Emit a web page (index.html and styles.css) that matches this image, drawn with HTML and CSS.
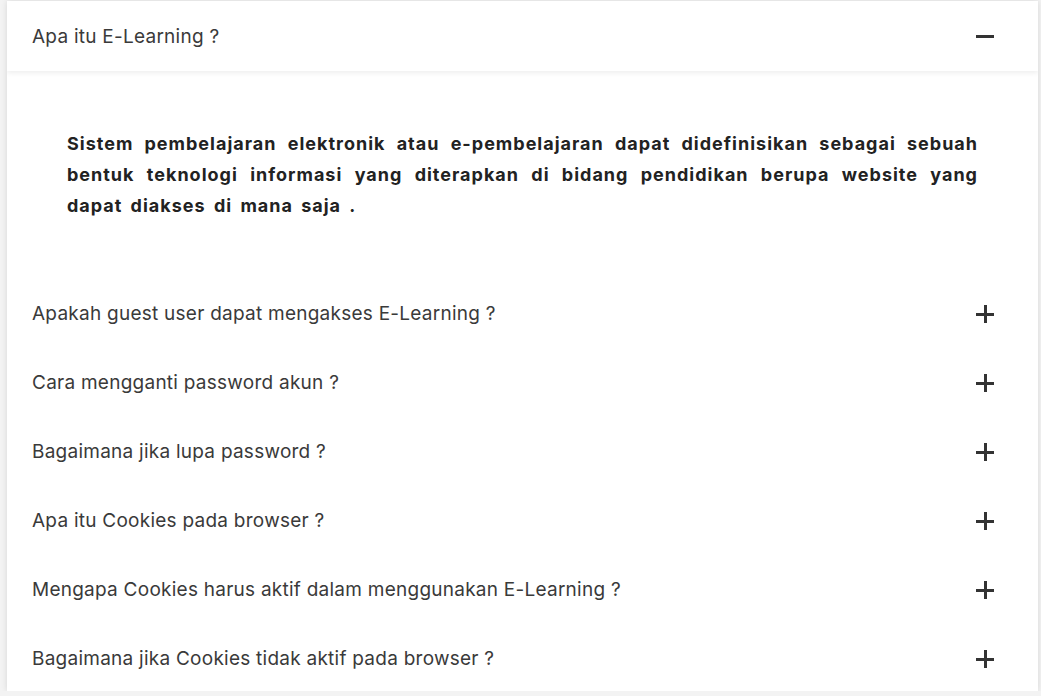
FILE: index.html
```html
<!DOCTYPE html>
<html lang="id">
<head>
<meta charset="utf-8">
<title>FAQ E-Learning</title>
<link rel="stylesheet" href="styles.css">
</head>
<body>
<div class="faq">
  <div class="item open">
    <div class="q q-head"><span>Apa itu E-Learning ?</span><span class="ico minus"></span></div>
    <div class="answer">
      <p>Sistem pembelajaran elektronik atau e-pembelajaran dapat didefinisikan sebagai sebuah bentuk teknologi informasi yang diterapkan di bidang pendidikan berupa website yang dapat diakses di mana saja .</p>
    </div>
  </div>
  <div class="q"><span>Apakah guest user dapat mengakses E-Learning ?</span><span class="ico plus"></span></div>
  <div class="q"><span>Cara mengganti password akun ?</span><span class="ico plus"></span></div>
  <div class="q"><span>Bagaimana jika lupa password ?</span><span class="ico plus"></span></div>
  <div class="q"><span>Apa itu Cookies pada browser ?</span><span class="ico plus"></span></div>
  <div class="q"><span>Mengapa Cookies harus aktif dalam menggunakan E-Learning ?</span><span class="ico plus"></span></div>
  <div class="q"><span>Bagaimana jika Cookies tidak aktif pada browser ?</span><span class="ico plus"></span></div>
</div>
</body>
</html>
```
FILE: styles.css
```css
html, body {
  margin: 0;
  padding: 0;
  background: #f3f3f3;
}
body {
  font-family: Inter, "Noto Sans", sans-serif;
  color: #333;
}
.faq {
  margin: 1px 3px 0 7px;
  width: 1031px;
  height: 690px;
  background: #fff;
  box-shadow: 0 0 6px rgba(0,0,0,0.12);
  overflow: hidden;
}
.q {
  height: 69px;
  display: flex;
  align-items: center;
  justify-content: space-between;
  padding: 0 44px 0 25px;
  font-size: 19px;
  letter-spacing: 0.25px;
  color: #3a3a3a;
}
.q-head {
  height: 70px;
  box-shadow: 0 2px 5px rgba(0,0,0,0.07);
  position: relative;
}
.answer {
  padding: 57px 60px 58px 60px;
}
.answer p {
  margin: 0;
  font-size: 18px;
  font-weight: 700;
  letter-spacing: 1px;
  word-spacing: 3px;
  line-height: 31px;
  text-align: justify;
  color: #222;
}
.ico {
  width: 18px;
  height: 18px;
  position: relative;
  flex: none;
}
.ico::before, .ico::after {
  content: "";
  position: absolute;
  background: #333;
}
.ico::before {
  left: 0;
  top: 8px;
  width: 18px;
  height: 3px;
}
.plus::after {
  left: 8px;
  top: 0;
  width: 3px;
  height: 18px;
}
.minus::after {
  display: none;
}
```
